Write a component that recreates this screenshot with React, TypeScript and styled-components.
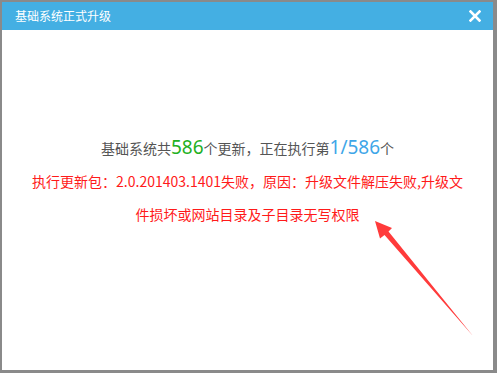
import React from "react";
import styled, { createGlobalStyle } from "styled-components";

const Global = createGlobalStyle`
  html, body { margin: 0; padding: 0; }
  body {
    background: #8a8a8a;
    font-family: "Noto Sans CJK SC", "Noto Sans", sans-serif;
  }
`;

const Frame = styled.div`
  position: relative;
  width: 497px;
  height: 373px;
  box-sizing: border-box;
  padding: 2px 4px 3px 2px;
  display: flex;
`;

const Dialog = styled.div`
  flex: 1;
  display: flex;
  flex-direction: column;
  background: #ffffff;
`;

const Header = styled.div`
  height: 28px;
  background: #44afe3;
  display: flex;
  align-items: center;
  justify-content: space-between;
  padding: 0 12px 0 13px;
`;

const Title = styled.div`
  color: #ffffff;
  font-size: 12px;
  line-height: 28px;
`;

const Close = styled.div`
  width: 12px;
  height: 12px;
  display: flex;
  align-items: center;
  justify-content: center;
  margin-top: -1px;
`;

const Body = styled.div`
  flex: 1;
  padding: 101px 24px 0 24px;
  text-align: center;
  font-size: 14px;
  line-height: 33px;
`;

const Status = styled.div`
  color: #555555;
`;

const Num = styled.span<{ $color: string }>`
  color: ${(p) => p.$color};
  font-size: 19px;
  font-family: "Noto Sans", "Noto Sans CJK SC", sans-serif;
`;

const Error = styled.div`
  color: #ff1a1a;
`;

const Arrow = styled.svg`
  position: absolute;
  left: 0;
  top: 0;
  pointer-events: none;
`;

export default function App() {
  return (
    <Frame>
      <Global />
      <Dialog>
        <Header>
          <Title>基础系统正式升级</Title>
          <Close>
            <svg width="12" height="12" viewBox="0 0 12 12">
              <path d="M1.5 1.5 L10.5 10.5 M10.5 1.5 L1.5 10.5" stroke="#ffffff" strokeWidth="2.6" strokeLinecap="square" />
            </svg>
          </Close>
        </Header>
        <Body>
          <Status>
            基础系统共<Num $color="#22b022">586</Num>个更新，正在执行第
            <Num $color="#3ea6e8">1/586</Num>个
          </Status>
          <Error>
            执行更新包：2.0.201403.1401失败，原因：升级文件解压失败,升级文件损坏或网站目录及子目录无写权限
          </Error>
        </Body>
      </Dialog>
      <Arrow width="497" height="373" viewBox="0 0 497 373">
        <polygon
          points="375,221 392,228 388.5,231.5 473,336 384.5,235 380,238.5"
          fill="#ff3b3b"
        />
      </Arrow>
    </Frame>
  );
}
